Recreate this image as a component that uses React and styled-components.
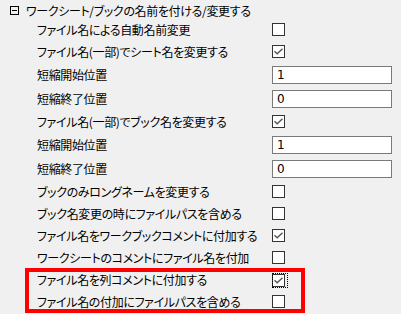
import React from "react";
import styled, { createGlobalStyle } from "styled-components";

const GlobalStyle = createGlobalStyle`
  html, body {
    margin: 0;
    padding: 0;
    background: #f0f0f0;
  }
  body {
    font-family: "Noto Sans CJK JP", "Liberation Sans", sans-serif;
    font-size: 12px;
    color: #000;
  }
`;

const Panel = styled.div`
  width: 401px;
  height: 314px;
  background: #f0f0f0;
  overflow: hidden;
`;

const Header = styled.div`
  display: flex;
  align-items: center;
  height: 19px;
  padding: 2px 0 0 10px;
  box-sizing: border-box;
  gap: 7px;
`;

const Toggle = styled.span`
  width: 9px;
  height: 9px;
  border: 1px solid #000;
  box-sizing: border-box;
  display: flex;
  align-items: center;
  justify-content: center;

  &::before {
    content: "";
    width: 5px;
    height: 1px;
    background: #000;
  }
`;

const Label = styled.span`
  white-space: nowrap;
  font-feature-settings: "palt";
  letter-spacing: -0.35px;
  line-height: 14px;
`;

const Row = styled.div`
  display: flex;
  align-items: center;
  height: ${(p) => (p.$input ? 24 : 22)}px;
  padding-left: 37px;
  box-sizing: border-box;
`;

const RowLabel = styled(Label)`
  width: 235px;
  flex-shrink: 0;
`;

const Box = styled.span`
  position: relative;
  width: 13px;
  height: 13px;
  border: 1px solid #333;
  background: #fff;
  box-sizing: border-box;
  display: flex;
  align-items: center;
  justify-content: center;
  margin-top: ${(p) => (p.$focus ? 0 : -1)}px;

  ${(p) =>
    p.$focus &&
    `
    &::after {
      content: "";
      position: absolute;
      left: -1px;
      top: -2px;
      width: 16px;
      height: 15px;
      border: 1px dotted #000;
      box-sizing: border-box;
    }
  `}
`;

const Field = styled.div`
  width: 120px;
  height: 18px;
  border: 1px solid #7a7a7a;
  background: #fff;
  box-sizing: border-box;
  padding-left: 4px;
  font-family: "DejaVu Sans", "Liberation Sans", sans-serif;
  font-size: 12px;
  line-height: 16px;
`;

const Marked = styled.div`
  position: relative;

  &::after {
    content: "";
    position: absolute;
    left: 25px;
    top: -1px;
    width: 280px;
    height: 45px;
    border: 4px solid #ff0000;
    box-sizing: border-box;
    pointer-events: none;
  }
`;

const Check = () => (
  <svg width="9" height="7" viewBox="0 0 9 7">
    <path d="M0.5 3.2 L3.2 5.8 L8.5 0.8" fill="none" stroke="#555" strokeWidth="1.4" />
  </svg>
);

const CheckRow = ({ label, checked, focus }) => (
  <Row>
    <RowLabel>{label}</RowLabel>
    <Box $focus={focus}>{checked && <Check />}</Box>
  </Row>
);

const InputRow = ({ label, value }) => (
  <Row $input>
    <RowLabel>{label}</RowLabel>
    <Field>{value}</Field>
  </Row>
);

export default function App() {
  return (
    <Panel>
      <GlobalStyle />
      <Header>
        <Toggle />
        <Label>ワークシート/ブックの名前を付ける/変更する</Label>
      </Header>
      <CheckRow label="ファイル名による自動名前変更" />
      <CheckRow label="ファイル名(一部)でシート名を変更する" checked />
      <InputRow label="短縮開始位置" value="1" />
      <InputRow label="短縮終了位置" value="0" />
      <CheckRow label="ファイル名(一部)でブック名を変更する" checked />
      <InputRow label="短縮開始位置" value="1" />
      <InputRow label="短縮終了位置" value="0" />
      <CheckRow label="ブックのみロングネームを変更する" />
      <CheckRow label="ブック名変更の時にファイルパスを含める" />
      <CheckRow label="ファイル名をワークブックコメントに付加する" checked />
      <CheckRow label="ワークシートのコメントにファイル名を付加" />
      <Marked>
        <CheckRow label="ファイル名を列コメントに付加する" checked focus />
        <CheckRow label="ファイル名の付加にファイルパスを含める" />
      </Marked>
    </Panel>
  );
}
